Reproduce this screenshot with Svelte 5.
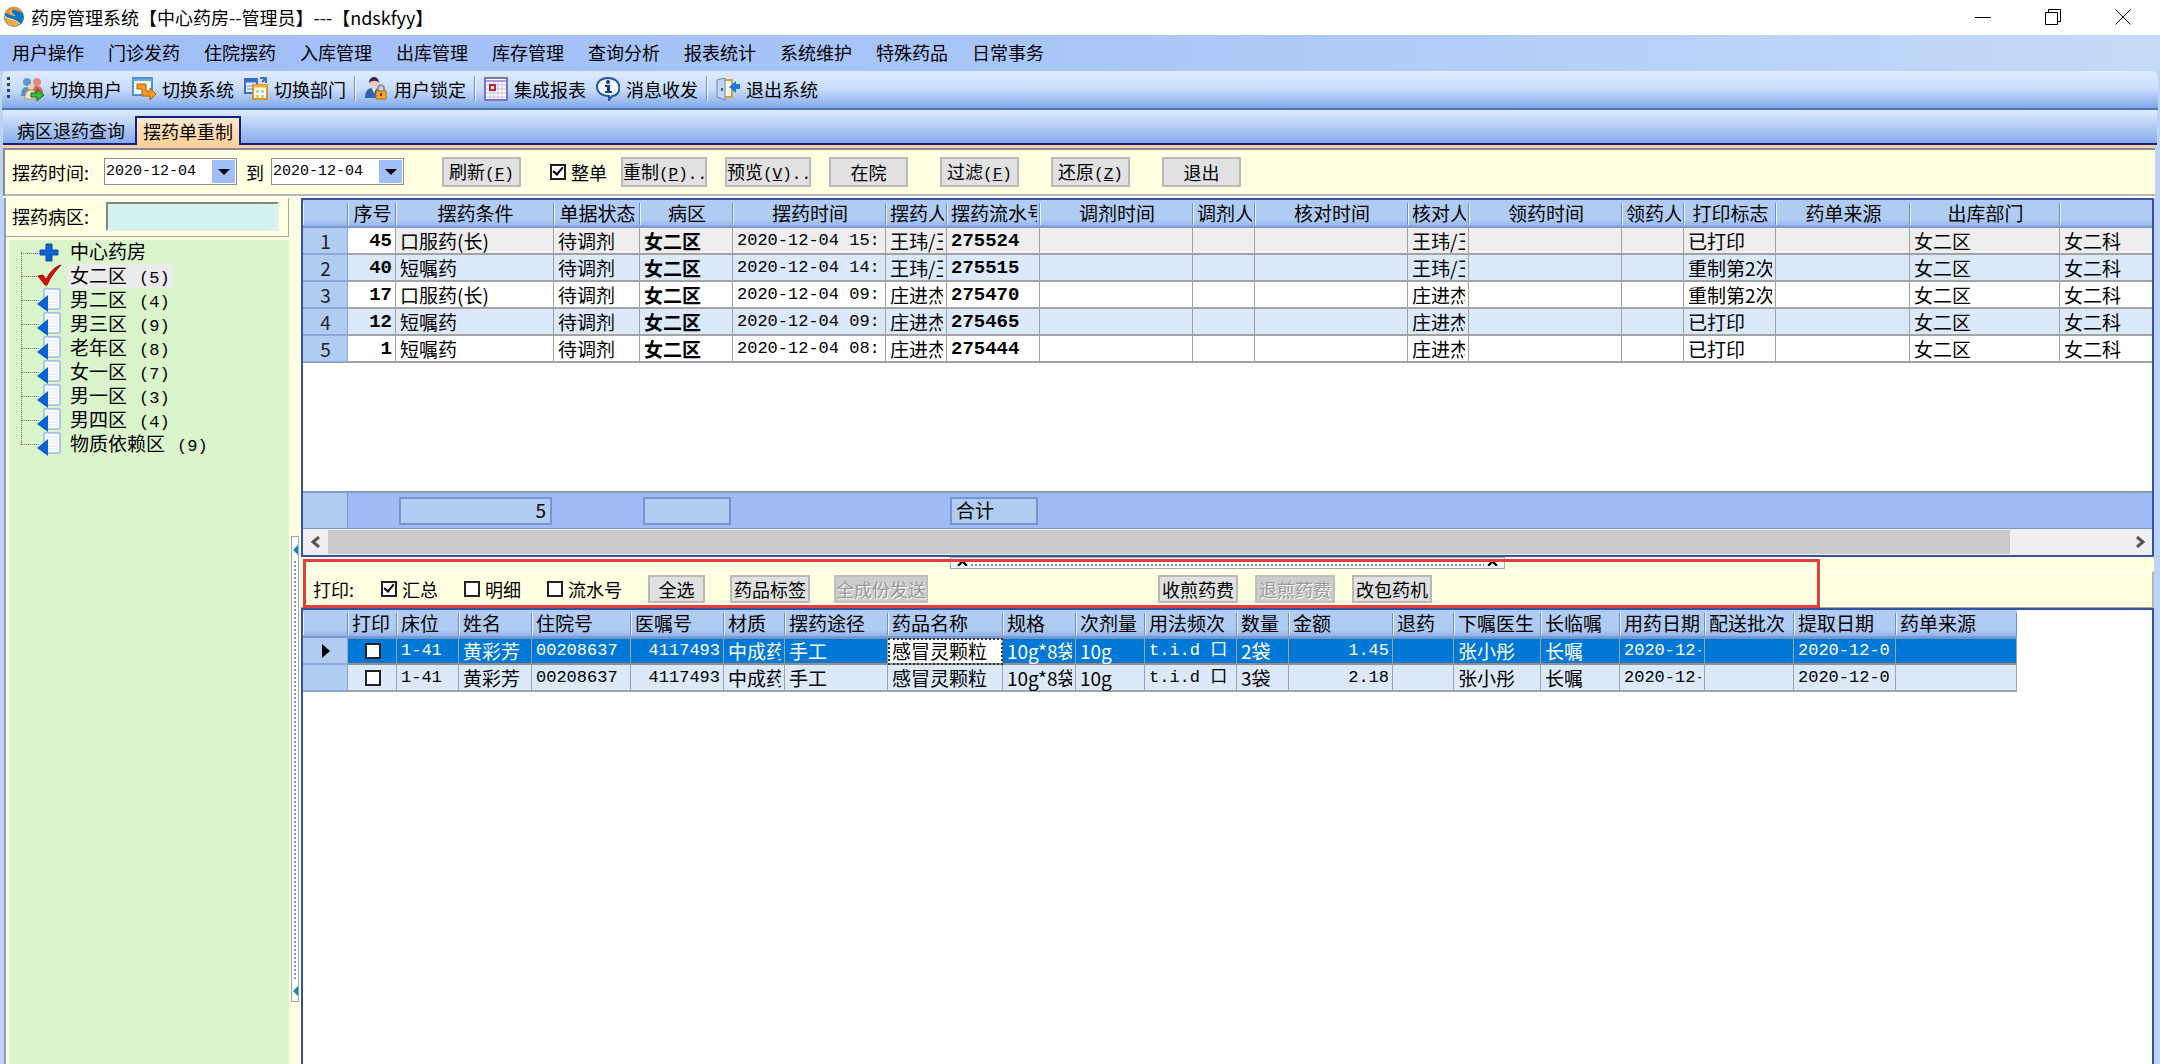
<script lang="ts">
  type Column = { title: string, width: number, kind?: string };

  const menus = ['用户操作', '门诊发药', '住院摆药', '入库管理', '出库管理', '库存管理', '查询分析', '报表统计', '系统维护', '特殊药品', '日常事务'];

  const tools = [
    { icon: 'users', text: '切换用户', line: false },
    { icon: 'system', text: '切换系统', line: false },
    { icon: 'dept', text: '切换部门', line: true },
    { icon: 'lock', text: '用户锁定', line: true },
    { icon: 'report', text: '集成报表', line: false },
    { icon: 'info', text: '消息收发', line: true },
    { icon: 'exit', text: '退出系统', line: false },
  ];

  const wards = [
    { name: '中心药房', icon: 'plus' },
    { name: '女二区', count: 5, icon: 'check' },
    { name: '男二区', count: 4, icon: 'page' },
    { name: '男三区', count: 9, icon: 'page' },
    { name: '老年区', count: 8, icon: 'page' },
    { name: '女一区', count: 7, icon: 'page' },
    { name: '男一区', count: 3, icon: 'page' },
    { name: '男四区', count: 4, icon: 'page' },
    { name: '物质依赖区', count: 9, icon: 'page' },
  ];

  const orderCols: Column[] = [
    { title: '', width: 45, kind: 'row-no' },
    { title: '序号', width: 48, kind: 'strong right' },
    { title: '摆药条件', width: 158 },
    { title: '单据状态', width: 86 },
    { title: '病区', width: 93, kind: 'strong-cn' },
    { title: '摆药时间', width: 153, kind: 'latin' },
    { title: '摆药人', width: 61 },
    { title: '摆药流水号', width: 93, kind: 'strong' },
    { title: '调剂时间', width: 153 },
    { title: '调剂人', width: 62 },
    { title: '核对时间', width: 153 },
    { title: '核对人', width: 61 },
    { title: '领药时间', width: 153 },
    { title: '领药人', width: 62 },
    { title: '打印标志', width: 92 },
    { title: '药单来源', width: 134 },
    { title: '出库部门', width: 150 },
    { title: '', width: 200 },
  ];

  function order(no: number, seq: number, kind: string, time: string, person: string, serial: number, flag: string): (string | number)[] {
    return [no, seq, kind, '待调剂', '女二区', '2020-12-04 ' + time, person, serial, '', '', '', person, '', '', flag, '', '女二区', '女二科'];
  }

  const orders = [
    order(1, 45, '口服药(长)', '15:', '王玮/王', 275524, '已打印'),
    order(2, 40, '短嘱药', '14:', '王玮/王', 275515, '重制第2次'),
    order(3, 17, '口服药(长)', '09:', '庄进杰', 275470, '重制第2次'),
    order(4, 12, '短嘱药', '09:', '庄进杰', 275465, '已打印'),
    order(5, 1, '短嘱药', '08:', '庄进杰', 275444, '已打印'),
  ];

  const totals: Record<number, string> = { 2: '5', 4: '', 7: '合计' };

  const drugCols: Column[] = [
    { title: '', width: 45, kind: 'row-no' },
    { title: '打印', width: 49, kind: 'tick' },
    { title: '床位', width: 62, kind: 'latin' },
    { title: '姓名', width: 73 },
    { title: '住院号', width: 99, kind: 'latin' },
    { title: '医嘱号', width: 93, kind: 'latin right' },
    { title: '材质', width: 61 },
    { title: '摆药途径', width: 103 },
    { title: '药品名称', width: 115, kind: 'drug' },
    { title: '规格', width: 73 },
    { title: '次剂量', width: 69 },
    { title: '用法频次', width: 92, kind: 'latin' },
    { title: '数量', width: 52 },
    { title: '金额', width: 104, kind: 'latin right' },
    { title: '退药', width: 61 },
    { title: '下嘱医生', width: 87 },
    { title: '长临嘱', width: 79 },
    { title: '用药日期', width: 85, kind: 'latin' },
    { title: '配送批次', width: 89 },
    { title: '提取日期', width: 102, kind: 'latin' },
    { title: '药单来源', width: 121 },
  ];

  function drug(amount: string, price: string): string[] {
    return ['', '', '1-41', '黄彩芳', '00208637', '4117493', '中成药', '手工', '感冒灵颗粒', '10g*8袋', '10g', 't.i.d 口', amount, price, '', '张小彤', '长嘱', '2020-12-', '', '2020-12-0', ''];
  }

  const drugs = [drug('2袋', '1.45'), drug('3袋', '2.18')];

  let selectedWard = $state(1);
  let selectedDrug = $state(0);
  let dateFrom = $state('2020-12-04');
  let dateTo = $state('2020-12-04');
  let printed = $state([false, false]);
</script>

{#snippet cols(list: Column[])}
  <colgroup>
    {#each list as col}
      <col style="width: {col.width}px">
    {/each}
  </colgroup>
{/snippet}

{#snippet toolIcon(name: string)}
  <svg class="icon" viewBox="0 0 24 24" aria-hidden="true">
    {#if name === 'users'}
      <circle cx="7" cy="5" r="4" fill="#5c9bc9" />
      <circle cx="17" cy="5" r="4" fill="#e58a78" />
      <path d="M1 19c0-6 2-9 6-9s5 3 5 9z" fill="#5b93b8" />
      <path d="M11 17c0-5 2-8 6-8s6 3 6 8z" fill="#d9654f" />
      <circle cx="11" cy="10" r="3" fill="#f5d3a7" />
      <path d="M5 22c0-6 2-9 6-9s5 3 5 9z" fill="#efe3ce" stroke="#b59561" />
      <path d="M11 16h6v-4l7 6-7 6v-4h-6z" fill="#3fb93c" stroke="#1b6b20" />
    {:else if name === 'system'}
      <path d="M1 1h19v17H1z" fill="#f8fcff" stroke="#4b92d3" stroke-width="2" />
      <path d="M1 3h19" stroke="#67aee4" stroke-width="2" />
      <path d="M5 7h9v7h4v-3l6 6-6 6v-4h-8v-7H5z" fill="#f59a23" stroke="#b5590b" />
    {:else if name === 'dept'}
      <path d="M1 2h12v14H1z" fill="#e6efff" stroke="#3a6bd0" stroke-width="2" />
      <path d="M1 4h12" stroke="#3a6bd0" stroke-width="3" />
      <path d="M3 9h5M3 12h5" stroke="#6b91df" />
      <path d="M16 1h6v5M21 2l-3 3" stroke="#3a6bd0" stroke-width="2" fill="none" />
      <path d="M9 8h14v14H9z" fill="#fff" stroke="#d99227" stroke-width="2" />
      <path d="M9 9h14" stroke="#f2ae3a" stroke-width="3" />
      <path d="M12 13h3v3h-3zM17 13h3v3h-3zM12 18h3v3h-3zM17 18h3v3h-3z" fill="#bcd98b" />
    {:else if name === 'lock'}
      <circle cx="10" cy="6" r="5" fill="#f0c9c4" />
      <path d="M5 6c0-8 10-8 10 0-2-3-7-3-10 0z" fill="#40244f" />
      <path d="M1 21c0-6 2-9 6-10l3 4 3-4c3 1 4 4 4 10z" fill="#2f62b3" />
      <path d="M9 12l1 5 1-5z" fill="#fff" />
      <path d="M14 15v-3c0-5 6-5 6 0v3" fill="none" stroke="#8d8f96" stroke-width="2" />
      <path d="M12 14h10v8H12z" fill="#f6a630" stroke="#b36a0d" />
      <path d="M17 16v3" stroke="#6d3c00" stroke-width="2" />
    {:else if name === 'report'}
      <path d="M1 1h22v22H1z" fill="#fff" stroke="#7a70c7" stroke-width="2" />
      <path d="M2 4h20" stroke="#a99de0" stroke-width="2" />
      <path d="M2 8h20M2 12h20M2 16h20M2 20h20M6 5v17M10 5v17M14 5v17M18 5v17" stroke="#c3bdec" />
      <path d="M6 8h5v5H6z" fill="#fff" stroke="#c9242b" stroke-width="2" />
    {:else if name === 'info'}
      <path d="M12 1c15 0 14 18 4 18l-3 4v-4C-3 19-3 1 12 1z" fill="#f4f9ff" stroke="#2455a4" stroke-width="2" />
      <circle cx="12" cy="5" r="2" fill="#173f91" />
      <path d="M9 9h3v6M9 15h7" stroke="#173f91" stroke-width="2" fill="none" />
      <path d="M11 8h3v7h-3z" fill="#173f91" />
    {:else}
      <path d="M5 3h11v17H5z" fill="#fff8d8" stroke="#d0a53c" stroke-width="2" />
      <path d="M1 3l8-2v22l-8-3z" fill="#c5d6f4" stroke="#6a86bd" />
      <path d="M6 11v3" stroke="#3c5da1" stroke-width="2" />
      <path d="M24 7v5h-4v4l-7-6 7-6v3z" fill="#1d78dd" />
    {/if}
  </svg>
{/snippet}

{#snippet wardIcon(name: string)}
  <svg class="icon" viewBox="0 0 24 24" aria-hidden="true">
    {#if name === 'plus'}
      <path d="M9 4h6v6h6v5h-6v6H9v-6H3v-5h6z" fill="#0b63d6" stroke="#124a9c" />
    {:else if name === 'check'}
      <path d="M1 12l5-1 3 5C12 9 17 3 24 1 18 7 13 14 10 21H8z" fill="#e00b0b" stroke="#8d0f0f" />
    {:else}
      <path d="M7 1h16v20H7z" fill="#fbfcff" stroke="#6e9be8" />
      <path d="M9 5h12M9 8h12M9 11h12M9 14h12M9 17h12" stroke="#dfe4ee" />
      <path d="M11 7v17L0 16z" fill="#0c62cf" />
    {/if}
  </svg>
{/snippet}

<div class="window">
  <header class="title-bar">
    <svg class="logo" viewBox="0 0 22 22" aria-hidden="true">
      <circle cx="11" cy="11" r="10" fill="#1673ba" />
      <path d="M2 6C6-1 16-1 20 7c-4-1-7-4-11-3-3 1 0 4 3 6C8 9 4 9 2 6z" fill="#f0932e" />
      <path d="M1 9c3 5 11 3 16 9-5 5-15 3-16-9z" fill="#f0a83c" />
      <path d="M1 9c3 5 11 3 16 9M9 4c-3 1 0 4 3 6" fill="none" stroke="#d7ebf7" />
    </svg>
    <span class="title">药房管理系统【中心药房--管理员】---【ndskfyy】</span>
    <div class="window-buttons">
      <button aria-label="最小化"><svg viewBox="0 0 16 16"><path d="M0 8.5h16" /></svg></button>
      <button aria-label="还原窗口"><svg viewBox="0 0 16 16"><path d="M.5 3.5h12v12H.5zM3.5 3V.5h12v12H13" /></svg></button>
      <button aria-label="关闭"><svg viewBox="0 0 16 16"><path d="M.5.5l15 15M15.5.5l-15 15" /></svg></button>
    </div>
  </header>

  <nav class="menu-bar">
    {#each menus as menu}
      <button>{menu}</button>
    {/each}
  </nav>

  <div class="tool-bar">
    <span class="grip"></span>
    {#each tools as tool}
      <button>{@render toolIcon(tool.icon)}{tool.text}</button>
      {#if tool.line}<span class="line"></span>{/if}
    {/each}
  </div>

  <div class="tabs">
    <button>病区退药查询</button>
    <button class="active">摆药单重制</button>
  </div>

  <div class="filter-bar">
    <label class="from-label" for="date-from">摆药时间:</label>
    <div class="date-box">
      <input id="date-from" type="text" bind:value={dateFrom}>
      <button aria-label="选择开始日期"><svg viewBox="0 0 12 6"><path d="M0 0h12L6 6z" /></svg></button>
    </div>
    <label class="to-label" for="date-to">到</label>
    <div class="date-box">
      <input id="date-to" type="text" bind:value={dateTo}>
      <button aria-label="选择结束日期"><svg viewBox="0 0 12 6"><path d="M0 0h12L6 6z" /></svg></button>
    </div>
    <div class="filter-buttons">
      <button class="push">刷新<i>(<u>F</u>)</i></button>
      <div class="group">
        <label class="check"><input type="checkbox" checked>整单</label>
        <button class="push long">重制<i>(<u>P</u>)..</i></button>
      </div>
      <button class="push long">预览<i>(<u>V</u>)..</i></button>
      <button class="push">在院</button>
      <button class="push wide-gap">过滤<i>(<u>F</u>)</i></button>
      <button class="push wide-gap">还原<i>(<u>Z</u>)</i></button>
      <button class="push wide-gap">退出</button>
    </div>
  </div>

  <div class="body">
    <aside>
      <div class="ward-search">
        <label for="ward">摆药病区:</label>
        <input id="ward" type="text">
      </div>
      <ul class="tree">
        {#each wards as ward, i}
          <li>
            <button class:selected={selectedWard === i} onclick={() => selectedWard = i}>
              {@render wardIcon(ward.icon)}
              <span>{ward.name}{#if ward.count}<i>({ward.count})</i>{/if}</span>
            </button>
          </li>
        {/each}
      </ul>
    </aside>

    <div class="gutter">
      <div class="side-splitter">
        <svg viewBox="0 0 5 10"><path d="M5 0v10L0 5z" /></svg>
        <span></span>
        <svg viewBox="0 0 5 10"><path d="M5 0v10L0 5z" /></svg>
      </div>
    </div>

    <main>
      <section class="orders">
        <div class="order-rows">
          <table class="centered">
            {@render cols(orderCols)}
            <thead>
              <tr>
                {#each orderCols as col}<th><div class="clip">{col.title}</div></th>{/each}
              </tr>
            </thead>
            <tbody>
              {#each orders as row, i}
                <tr class:current={i === 0}>
                  {#each row as value, c}<td class={orderCols[c].kind}><div class="clip">{value}</div></td>{/each}
                </tr>
              {/each}
            </tbody>
          </table>
        </div>
        <table class="totals">
          {@render cols(orderCols)}
          <tbody>
            <tr>
              {#each orderCols as col, c}
                <td>{#if c in totals}<span class="total" class:number={c === 2}>{totals[c]}</span>{/if}</td>
              {/each}
            </tr>
          </tbody>
        </table>
        <div class="scroll-bar">
          <button aria-label="向左滚动"><svg viewBox="0 0 10 12"><path d="M8 1L2 6l6 5" /></svg></button>
          <div class="track"><div class="thumb"></div></div>
          <button aria-label="向右滚动"><svg viewBox="0 0 10 12"><path d="M2 1l6 5-6 5" /></svg></button>
        </div>
      </section>

      <div class="print-area">
        <div class="row-splitter">
          <svg viewBox="0 0 10 6"><path d="M1 6l4-4 4 4" /></svg>
          <span></span>
          <svg viewBox="0 0 10 6"><path d="M1 6l4-4 4 4" /></svg>
        </div>
        <div class="print-bar">
          <span class="print-label">打印:</span>
          <div class="checks">
            <label class="check"><input type="checkbox" checked>汇总</label>
            <label class="check"><input type="checkbox">明细</label>
            <label class="check"><input type="checkbox">流水号</label>
          </div>
          <button class="push small">全选</button>
          <button class="push fit first">药品标签</button>
          <button class="push fit second" disabled>全成份发送</button>
          <div class="fees">
            <button class="push fit">收煎药费</button>
            <button class="push fit" disabled>退煎药费</button>
            <button class="push fit">改包药机</button>
          </div>
        </div>
        <div class="marker"></div>
      </div>

      <section class="drugs">
        <table>
          {@render cols(drugCols)}
          <thead>
            <tr>
              {#each drugCols as col}<th><div class="clip">{col.title}</div></th>{/each}
            </tr>
          </thead>
          <tbody>
            {#each drugs as row, i}
              <tr class:selected={selectedDrug === i} onclick={() => selectedDrug = i}>
                {#each row as value, c}
                  <td class={drugCols[c].kind}>
                    {#if c === 0 && selectedDrug === i}
                      <svg class="pointer" viewBox="0 0 8 14"><path d="M0 0l8 7-8 7z" /></svg>
                    {:else if c === 1}
                      <input type="checkbox" aria-label="打印" bind:checked={printed[i]}>
                    {:else}
                      <div class="clip">{value}</div>
                    {/if}
                  </td>
                {/each}
              </tr>
            {/each}
          </tbody>
        </table>
      </section>
    </main>
  </div>
</div>

<style>
  :global(body) {
    margin: 0;
    background: #fff;
  }

  .window {
    display: flex;
    flex-direction: column;
    height: 100vh;
    overflow: hidden;
    background: #bdd4f8;
    color: #000;
    font: 18px/24px "Noto Sans CJK SC", sans-serif;
    white-space: nowrap;
  }

  .window * {
    box-sizing: border-box;
  }

  button, input {
    font: inherit;
    color: inherit;
  }

  button {
    margin: 0;
    padding: 0;
    border: 0;
    background: none;
  }

  svg {
    display: block;
    flex: none;
  }

  i {
    font-family: "Liberation Mono", monospace;
    font-style: normal;
  }

  .icon {
    width: 24px;
    height: 24px;
  }

  .title-bar {
    display: flex;
    align-items: center;
    height: 35px;
    flex: none;
    padding: 0 2px 2px 3px;
    background: #fff;
  }

  .logo {
    width: 22px;
    height: 22px;
    margin-right: 6px;
  }

  .window-buttons {
    display: flex;
    margin-left: auto;
  }

  .window-buttons button {
    display: grid;
    place-items: center;
    width: 70px;
    height: 32px;
  }

  .window-buttons svg {
    width: 16px;
    height: 16px;
    fill: none;
    stroke: #000;
  }

  .menu-bar {
    display: flex;
    gap: 24px;
    height: 36px;
    flex: none;
    padding: 0 0 2px 12px;
    background: linear-gradient(90deg, #a0bef7, #a9c6f8 50%, #c4daf8);
  }

  .tool-bar {
    display: flex;
    align-items: center;
    gap: 10px;
    height: 39px;
    flex: none;
    margin: 0 2px;
    padding: 0 0 2px 5px;
    border-bottom: 2px solid #4d75b8;
    border-radius: 6px 6px 0 0;
    background: linear-gradient(#dfecff, #c6dbfa 50%, #83a8e9);
  }

  .tool-bar button {
    display: flex;
    align-items: center;
    gap: 6px;
  }

  .grip {
    width: 3px;
    height: 23px;
    background: repeating-linear-gradient(#27417f 0 3px, transparent 3px 6px);
  }

  .line {
    width: 2px;
    height: 25px;
    margin: 0 -2px;
    border-left: 1px solid #6a8ccb;
    background: #fff;
  }

  .tabs {
    display: flex;
    align-items: flex-end;
    height: 35px;
    flex: none;
    margin: 0 3px;
    background: linear-gradient(#dfecff, #83a8e9);
    box-shadow: inset 0 -2px #10208a;
  }

  .tabs button {
    height: 29px;
    padding: 0 10px 2px 14px;
  }

  .tabs .active {
    padding: 0 6px 2px;
    border: 2px solid #10208a;
    border-bottom: 0;
    background: linear-gradient(#ffe9cd, #fdd097);
  }

  .filter-bar {
    display: flex;
    align-items: center;
    height: 53px;
    flex: none;
    margin: 0 5px 0 3px;
    padding: 2px 0 3px 9px;
    border-top: 3px solid #f5cfa0;
    border-bottom: 2px solid #fff;
    background: #ffffe1;
    box-shadow: inset 2px 2px #8d8791, inset 0 -2px #b7b7b0;
  }

  .from-label {
    width: 92px;
  }

  .to-label {
    margin: 0 7px 0 9px;
  }

  .date-box {
    display: flex;
    width: 133px;
    height: 27px;
    padding: 1px;
    border: 1px solid #8f8f8f;
    background: #fff;
  }

  .date-box input {
    flex: 1;
    min-width: 0;
    padding: 0;
    border: 0;
    outline: 0;
    font: 15px "Liberation Mono", monospace;
  }

  .date-box button {
    display: grid;
    place-items: center;
    width: 23px;
    background: #a0bef7;
  }

  .date-box svg {
    width: 12px;
    height: 6px;
  }

  .filter-buttons {
    display: flex;
    align-items: center;
    gap: 18px;
    margin-left: 38px;
  }

  .group {
    display: flex;
    align-items: center;
    gap: 14px;
    margin-left: 11px;
  }

  .push {
    height: 30px;
    width: 79px;
    border: 2px solid #b9b9b9;
    background: #e1e1e1;
    line-height: 24px;
  }

  .push i {
    font-size: 16px;
  }

  .push.long {
    width: 86px;
    text-align: left;
  }

  .push.wide-gap {
    margin-left: 14px;
  }

  .check {
    display: flex;
    align-items: center;
    gap: 5px;
  }

  input[type="checkbox"] {
    appearance: none;
    display: grid;
    place-items: center;
    width: 16px;
    height: 16px;
    margin: 0;
    border: 2px solid #222;
    background: #fff;
  }

  input[type="checkbox"]:checked::before {
    content: "";
    width: 4px;
    height: 8px;
    margin-top: -3px;
    border: solid #000;
    border-width: 0 2px 2px 0;
    rotate: 40deg;
  }

  .body {
    display: flex;
    flex: 1;
    min-height: 0;
    margin: 0 6px 0 4px;
    border-left: 2px solid #8d9bbd;
    background: #ffffe1;
  }

  aside {
    display: flex;
    flex-direction: column;
    width: 283px;
    flex: none;
  }

  .ward-search {
    display: flex;
    align-items: center;
    gap: 14px;
    height: 39px;
    padding: 0 0 2px 6px;
    border: solid #a9a9a2;
    border-width: 0 1px 1px 0;
  }

  .ward-search label {
    width: 80px;
  }

  .ward-search input {
    width: 173px;
    height: 29px;
    padding: 0 4px;
    border: 2px solid;
    border-color: #858585 #e6f0e6 #e6f0e6 #858585;
    background: #d3f3f1;
  }

  .tree {
    flex: 1;
    margin: 3px 0 0 3px;
    padding: 0 0 0 12px;
    background: #daf4cc;
    list-style: none;
    font-size: 19px;
  }

  .tree li {
    position: relative;
    height: 24px;
    padding-left: 16px;
  }

  .tree li::before {
    content: "";
    position: absolute;
    left: 0;
    top: -12px;
    width: 17px;
    height: 24px;
    border: dotted #777;
    border-width: 0 0 1px 1px;
  }

  .tree li:first-child::before {
    top: 12px;
    height: 1px;
    border-left: 0;
  }

  .tree button {
    position: relative;
    display: flex;
    gap: 6px;
    height: 24px;
    line-height: 22px;
  }

  .tree span {
    padding: 0 3px;
  }

  .tree i {
    margin-left: 12px;
    font-size: 17px;
  }

  .tree .selected span {
    background: #ececec;
  }

  .gutter {
    display: flex;
    flex-direction: column;
    width: 12px;
    flex: none;
    padding-left: 2px;
  }

  .gutter::before {
    content: "";
    flex: 344;
  }

  .gutter::after {
    content: "";
    flex: 63;
  }

  .side-splitter {
    display: flex;
    flex-direction: column;
    align-items: center;
    justify-content: space-between;
    width: 8px;
    flex: 459;
    padding: 8px 0 5px;
    border: 1px solid #9aa8b8;
    background: #fff;
  }

  .side-splitter svg {
    width: 5px;
    height: 10px;
    fill: #1582c5;
  }

  .side-splitter span {
    width: 2px;
    flex: 1;
    margin: 6px 0;
    background: repeating-linear-gradient(#8298b8 0 2px, transparent 2px 4px);
  }

  main {
    display: flex;
    flex: 1;
    flex-direction: column;
    min-width: 0;
  }

  .orders {
    display: flex;
    flex-direction: column;
    height: 359px;
    flex: none;
    border: 2px solid #3552a4;
    background: #fff;
    overflow: hidden;
  }

  .order-rows {
    flex: 1;
  }

  table {
    width: 0;
    table-layout: fixed;
    border-collapse: separate;
    border-spacing: 0;
    font-size: 19px;
    line-height: 24px;
  }

  th, td {
    padding: 0 3px 0 4px;
    font-weight: 400;
    text-align: left;
  }

  .clip {
    margin: -3px 0;
    padding: 3px 0;
    overflow-x: clip;
  }

  th {
    height: 28px;
    border-bottom: 2px solid #7d9ad6;
    background:
      linear-gradient(#6d8dc8, #6d8dc8) right 3px / 1px 22px no-repeat,
      linear-gradient(#eef5ff, #eef5ff) left 3px / 1px 22px no-repeat,
      linear-gradient(#b0ccf2 75%, #93b3ec);
  }

  .centered th {
    text-align: center;
  }

  td {
    height: 27px;
    border: solid #a3a3a3;
    border-width: 0 1px 2px 0;
  }

  tbody tr:nth-child(even) td {
    background: #dce9fa;
  }

  tbody .current td {
    background: #eee;
  }

  tbody .current .strong.right {
    background: #fff;
  }

  tbody tr td.row-no {
    border-color: #8ba6d8;
    background: #b0ccf0;
    color: #222;
    text-align: center;
  }

  .latin {
    font-family: "Liberation Mono", "Noto Sans CJK SC", monospace;
    font-size: 17px;
  }

  .strong {
    font-family: "Liberation Mono", monospace;
    font-weight: 700;
  }

  .strong-cn {
    font-weight: 700;
  }

  .right {
    text-align: right;
  }

  .totals {
    flex: none;
    border-top: 2px solid #8499c4;
    border-bottom: 1px solid #7b97d0;
    background: #9fbcf6;
  }

  .totals td {
    height: 35px;
    padding: 0 2px 0 3px;
    border: 0;
  }

  .totals td:first-child {
    border-right: 1px solid #7894cf;
    background: #b0ccf0;
  }

  .total {
    display: block;
    height: 28px;
    padding: 0 4px;
    border: 2px solid #7894cf;
    background: #b0ccf0;
    line-height: 22px;
  }

  .number {
    text-align: right;
  }

  .scroll-bar {
    display: flex;
    height: 26px;
    padding: 1px 0;
    background: #efefef;
  }

  .scroll-bar button {
    display: grid;
    place-items: center;
    width: 25px;
  }

  .scroll-bar svg {
    width: 10px;
    height: 12px;
    fill: none;
    stroke: #555;
    stroke-width: 3;
  }

  .track {
    flex: 1;
  }

  .thumb {
    width: 93.5%;
    height: 100%;
    background: #cbcbcb;
  }

  .print-area {
    position: relative;
    display: flex;
    flex-direction: column;
    height: 51px;
    flex: none;
  }

  .row-splitter {
    display: flex;
    align-items: flex-end;
    gap: 3px;
    width: 30%;
    height: 12px;
    margin: 0 auto 2px;
    padding: 0 6px 2px;
    border: 1px solid #a9a9a2;
    background: #fff;
  }

  .row-splitter svg {
    width: 11px;
    height: 7px;
    fill: none;
    stroke: #000;
    stroke-width: 2;
  }

  .row-splitter span {
    flex: 1;
    height: 2px;
    background: repeating-linear-gradient(90deg, #8a8a9b 0 2px, transparent 2px 4px);
  }

  .print-bar {
    display: flex;
    align-items: center;
    flex: 1;
    padding: 0 0 2px 12px;
    border-top: 1px solid #fff;
    border-right: 2px solid #b5b5ae;
    border-bottom: 1px solid #a9a9a2;
  }

  .print-label {
    width: 68px;
  }

  .checks {
    display: flex;
    gap: 26px;
    width: 267px;
  }

  .print-bar .push {
    height: 28px;
    line-height: 22px;
  }

  .push.small {
    width: 57px;
  }

  .push.fit {
    width: auto;
    padding: 0 2px;
  }

  .push.first {
    margin-left: 25px;
  }

  .print-bar .second {
    margin-left: 24px;
    padding: 0;
  }

  .push:disabled {
    border-color: #bfbfbf;
    background: #ccc;
    color: #999;
    text-shadow: 1px 1px #fff;
  }

  .fees {
    display: flex;
    gap: 17px;
    margin-left: 230px;
  }

  .marker {
    position: absolute;
    top: 2px;
    right: 18%;
    bottom: 0;
    left: 2px;
    border: 3px solid #e63e3e;
    pointer-events: none;
  }

  .drugs {
    flex: 1;
    border: 2px solid #3552a4;
    border-bottom: 0;
    background: #fff;
    overflow: hidden;
  }

  tbody tr.selected td:not(.row-no) {
    border-bottom-color: #958f88;
    background: #0078d7;
    color: #fff;
    box-shadow: inset 0 1px #6a94b8;
  }

  tbody tr.selected td.drug {
    outline: 2px dotted #333;
    outline-offset: -2px;
    background: #fff;
    color: #000;
  }

  .tick input {
    margin: 0 auto;
  }

  .pointer {
    width: 8px;
    height: 14px;
    margin: 0 auto;
  }
</style>
